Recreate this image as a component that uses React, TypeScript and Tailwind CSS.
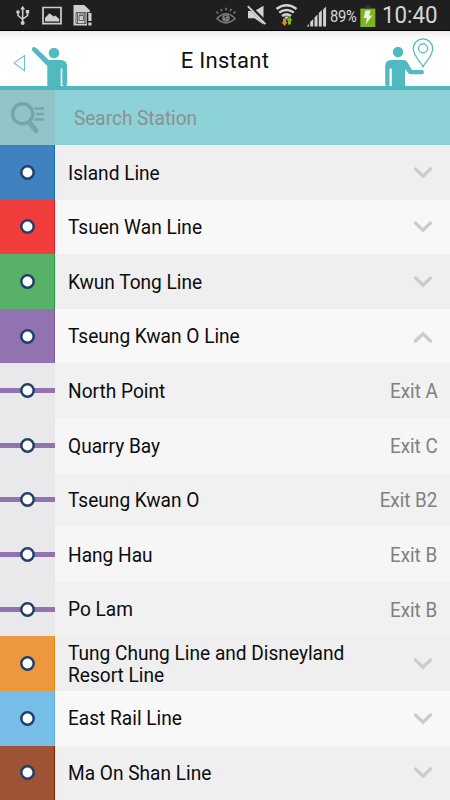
import React from 'react';

type Row = {
  name: string;
  color?: string;
  edge?: string;
  exit?: string;
  open?: boolean;
  bg: string;
};

const rows: Row[] = [
  { name: 'Island Line', color: 'bg-[#4082c0]', edge: 'border-[#0b72c4]', bg: 'bg-[#efefef]' },
  { name: 'Tsuen Wan Line', color: 'bg-[#f23d3d]', edge: 'border-[#f01820]', bg: 'bg-[#f8f8f8]' },
  { name: 'Kwun Tong Line', color: 'bg-[#57b268]', edge: 'border-[#1fa83c]', bg: 'bg-[#efefef]' },
  { name: 'Tseung Kwan O Line', color: 'bg-[#9174af]', edge: 'border-[#8058aa]', open: true, bg: 'bg-[#f8f8f8]' },
  { name: 'North Point', exit: 'Exit A', bg: 'bg-[#f1f1f1]' },
  { name: 'Quarry Bay', exit: 'Exit C', bg: 'bg-[#f6f6f6]' },
  { name: 'Tseung Kwan O', exit: 'Exit B2', bg: 'bg-[#f1f1f1]' },
  { name: 'Hang Hau', exit: 'Exit B', bg: 'bg-[#f6f6f6]' },
  { name: 'Po Lam', exit: 'Exit B', bg: 'bg-[#f1f1f1]' },
  { name: 'Tung Chung Line and Disneyland Resort Line', color: 'bg-[#eb983f]', edge: 'border-[#f08c00]', bg: 'bg-[#efefef]' },
  { name: 'East Rail Line', color: 'bg-[#76bde8]', edge: 'border-[#56b2ec]', bg: 'bg-[#f8f8f8]' },
  { name: 'Ma On Shan Line', color: 'bg-[#9e5334]', edge: 'border-[#901c00]', bg: 'bg-[#efefef]' },
];

const StatusBar = () => (
  <div className="flex h-[31px] shrink-0 items-start border-b border-black bg-[#1f1f1f] text-[#d6d6d6]">
    {/* usb, picture, sim card */}
    <svg width="100" height="30" viewBox="0 0 100 30" fill="none" stroke="#cfcfcf">
      <path d="M22.7 8v15M18 12v3.5l4.7 4M27.5 12v3.5l-4.7 3.5" strokeWidth="1.5" />
      <path d="M20.3 9.5l2.4-3.7 2.4 3.7z" fill="#cfcfcf" stroke="none" />
      <circle cx="22.7" cy="23" r="2" fill="#cfcfcf" stroke="none" />
      <circle cx="18" cy="12" r="1.8" fill="#cfcfcf" stroke="none" />
      <path d="M25.8 10h3.4v3.4h-3.4z" fill="#cfcfcf" stroke="none" />
      <path d="M43 7.5h18v16.2H43z" strokeWidth="1.7" />
      <path d="M45 21.5v-3.6l4.6-4.7 4 3.4 1.7-1.2 4 3.5v2.6z" fill="#cfcfcf" stroke="none" />
      <path d="M73.5 5h10.7l5.6 5.2v2H87v13.3H73.5z" fill="#cfcfcf" stroke="none" />
      <path d="M88.3 13h3.2v8h-3.2zM88.3 22.5h3.2v3h-3.2z" fill="#cfcfcf" stroke="none" />
      <path d="M76 12.5h10v11H76zM79 15.5h4.5v5H79zM77.5 12.5v11M84.8 12.5v11M79 14h5" stroke="#333" strokeWidth=".7" />
    </svg>
    {/* eye, mute, wifi, signal */}
    <svg className="ml-[114px]" width="115" height="30" viewBox="214 0 115 30" fill="none">
      <g stroke="#777" strokeWidth="1.7">
        <path d="M217 18.5q9-9.5 18 0q-9 8.5-18 0zM218.3 13.5l-1.8-1.8M222 11.2l-1-2.2M226 10.2V7.8M230.2 11.2l1.2-2.2M233.6 13.5l1.8-1.8" />
        <circle cx="226" cy="18" r="3" fill="#777" />
        <circle cx="225.5" cy="16.8" r="1" fill="#1f1f1f" stroke="none" />
      </g>
      <path d="M248 11h6.5l9-5.2v18.7l-9-6.2H248z" fill="#d2d2d2" />
      <path d="M248.5 5.5l18.2 18.2" stroke="#1f1f1f" strokeWidth="4" />
      <path d="M247.8 6.2l17.6 18" stroke="#d2d2d2" strokeWidth="1.9" />
      <g stroke="#d2d2d2" strokeWidth="2.5">
        <path d="M276.5 9q10-7.5 20 0M279.2 12.6q7.3-5.2 14.6 0M282 16q4.5-3.2 9 0" />
      </g>
      <path d="M284 16.5h5l-2.5 3z" fill="#d2d2d2" />
      <path d="M283 18.5h3v3.5h1.6l-3.1 4-3.1-4h1.6z" fill="#e08a2c" />
      <path d="M288 24.5v-4h-1.6l3.1-4 3.1 4H291v4z" fill="#7db51a" />
      <path d="M306.5 26.5l2.5-2.5v2.5zM310.2 26.5v-4.5l3-3v7.5zM314.5 26.5v-9l3-3v12zM318.8 26.5V13l3-3v16.5zM323.1 26.5V9.5l3-3v20z" fill="#d2d2d2" />
    </svg>
    <span className="ml-px mt-[6px] w-[29px] origin-left scale-x-92 whitespace-nowrap text-[16px] leading-[22px] tracking-[-0.3px]">89%</span>
    <svg className="ml-px" width="17" height="30" viewBox="0 0 17 30">
      <path d="M5.2 4.7h5.6V8h4.5v19H.4V8h4.8z" fill="#303030" />
      <path d="M.4 8.7h14.9V27H.4z" fill="#7db51a" />
      <path d="M5.4 10.4h5.2l-1.5 5h3.2l-6.6 9.2 1.1-6.5H3.7z" fill="#eee" />
    </svg>
    <span className="ml-[5px] mt-[2px] origin-left scale-x-95 whitespace-nowrap text-[23.5px] leading-[27px]">10:40</span>
  </div>
);

const Header = () => (
  <header className="flex h-[59px] shrink-0 items-start justify-between border-b-4 border-[#4fb8bf] bg-linear-to-b from-[#ececec] via-[#fdfdfd] via-15% to-white to-30%">
    <svg width="80" height="55" viewBox="0 31 80 55" fill="#51b9c0">
      <path d="M24.5 55.5v15.2L14 63z" fill="none" stroke="#6cc5cb" strokeWidth="1.1" />
      <circle cx="54" cy="53" r="5.3" />
      <path d="M35.7 47.5q-2.5-1.5-3.6.8-.8 1.8.8 3L47.3 66v20h13.4V68.5h1.6V85l1.7 1h2l1-1V66q0-6-6.5-6h-11.7z" />
    </svg>
    <h1 className="mt-[13px] text-[22px] leading-[33px] tracking-[0.3px] text-[#111]">E Instant</h1>
    <svg width="80" height="55" viewBox="370 31 80 55" fill="#51b9c0">
      <circle cx="398" cy="52" r="5.2" />
      <path d="M385.2 85V66q0-6 6-6h12q3 0 4.3 2.3l4.4 7.6h10.3q1.8.2 1.8 2.2t-1.8 2.2h-11.6q-1.5 0-2.4-1.2l-3.2-4.1v17h-13.2V68.5h-2.3V86h-2.8z" />
      <path d="M423 66.8c-1.5-4-9.7-10.4-9.7-18.2a9.7 9.7 0 0 1 19.4 0c0 7.8-8.2 14.2-9.7 18.2z" fill="none" stroke="#51b9c0" strokeWidth="1.2" />
      <circle cx="423" cy="48.3" r="4.5" fill="none" stroke="#51b9c0" strokeWidth="1.2" />
    </svg>
  </header>
);

const SearchBar = () => (
  <div className="flex h-[55px] shrink-0 items-center bg-[#8dd2d6]">
    <div className="flex h-full w-[55px] items-center bg-[#91c3c8]">
      <svg width="55" height="55" viewBox="0 90 55 55" fill="none" stroke="#72a6aa">
        <circle cx="22.6" cy="113.8" r="10" strokeWidth="3.5" />
        <path d="M29.5 122.5l6.5 8" strokeWidth="5" strokeLinecap="round" />
        <path d="M34.5 108.5H44M36 114h8M34.5 119.5H44" strokeWidth="2.3" />
      </svg>
    </div>
    <span className="ml-[19px] origin-left scale-x-95 text-[20px] text-[#8b9092]">Search Station</span>
  </div>
);

const Dot = () => (
  <svg width="15" height="15" viewBox="0 0 15 15">
    <circle cx="7.5" cy="7.5" r="6.2" fill="#fff" stroke="#203f69" strokeWidth="2.5" />
  </svg>
);

const Chevron = ({ open }: { open?: boolean }) => (
  <svg width="20" height="12" viewBox="0 0 20 12" fill="none" stroke="#cccccc" strokeWidth="3.3" strokeLinecap="round">
    <path d={open ? 'M2.5 10L10 2.7 17.5 10' : 'M2.5 2L10 9.3 17.5 2'} />
  </svg>
);

const LineRow = ({ row }: { row: Row }) => (
  <li className={`flex h-[54.6px] shrink-0 items-center ${row.bg}`}>
    {row.color ? (
      <div className={`flex h-full w-[55px] shrink-0 items-center justify-center border-r ${row.color} ${row.edge}`}>
        <Dot />
      </div>
    ) : (
      <div className="grid h-full w-[55px] shrink-0 place-items-center bg-[#e9e9eb]">
        <span className="col-start-1 row-start-1 h-[5px] w-full bg-[#9174af]" />
        <span className="col-start-1 row-start-1">
          <Dot />
        </span>
      </div>
    )}
    <span className="ml-[12.5px] w-[300px] origin-left scale-x-[0.955] pt-[2px] text-[20px] leading-[21.5px] text-[#0c0c0c]">{row.name}</span>
    {row.exit ? (
      <span className="ml-auto mr-[12.5px] origin-right scale-x-94 whitespace-nowrap pt-px text-[20px] text-[#808080]">{row.exit}</span>
    ) : (
      <span className="ml-auto mr-[17.5px] pt-px">
        <Chevron open={row.open} />
      </span>
    )}
  </li>
);

const App = () => {
  return (
    <div className="flex h-[800px] w-[450px] flex-col overflow-hidden bg-white font-[Roboto,sans-serif]">
      <StatusBar />
      <Header />
      <SearchBar />
      <ul className="flex flex-col">
        {rows.map((row) => (
          <LineRow key={row.name} row={row} />
        ))}
      </ul>
    </div>
  );
};

export default App;
